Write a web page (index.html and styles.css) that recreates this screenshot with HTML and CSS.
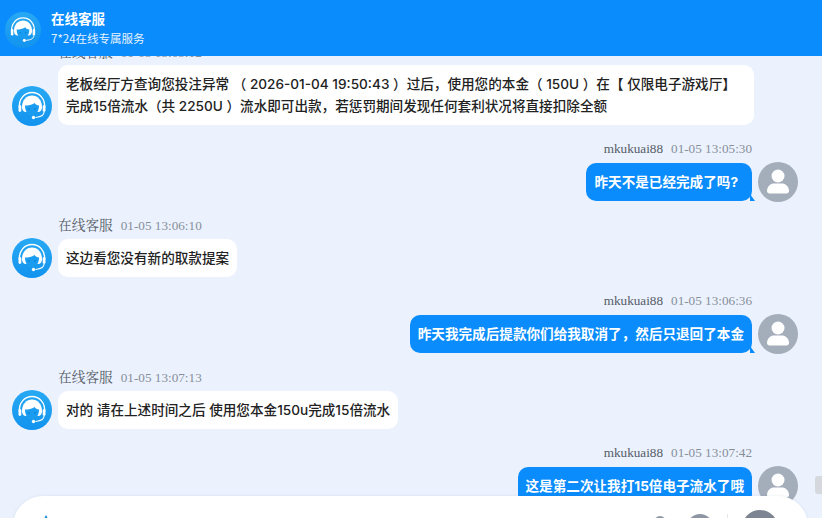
FILE: index.html
```html
<!DOCTYPE html>
<html lang="zh">
<head>
<meta charset="utf-8">
<title>在线客服</title>
<link rel="stylesheet" href="styles.css">
</head>
<body>
<svg class="defs" width="0" height="0" aria-hidden="true">
  <defs>
    <linearGradient id="agentBg" x1="0" y1="0" x2="0" y2="1">
      <stop offset="0" stop-color="#28a9f4"/>
      <stop offset="1" stop-color="#1293ee"/>
    </linearGradient>
  </defs>
  <symbol id="agent" viewBox="0 0 40 40">
    <circle cx="20" cy="20" r="20" fill="url(#agentBg)"/>
    <path d="M7.500 22c-1-9 5-15.500 12.500-15.500S33.500 13 32.500 22" fill="none" stroke="#fff" stroke-width="1.400"/>
    <path d="M10 21c0-7 4.500-11.500 10-11.500S30 14 30 21c0 3-1.500 5-4 5H14c-2.500 0-4-2-4-5z" fill="#fff"/>
    <path d="M13 19.500c3.500 0 7-.5 9.500-2.500 1 1.500 2.500 2.500 4.500 2.500 0 6-3 10-7 10s-7-4-7-10z" fill="#1a9cf0"/>
    <circle cx="17" cy="23" r=".8" fill="#0f7cd0"/>
    <circle cx="23" cy="23" r=".8" fill="#0f7cd0"/>
    <rect x="6.500" y="19" width="2.800" height="7" rx="1.400" fill="#fff"/>
    <rect x="30.700" y="19" width="2.800" height="7" rx="1.400" fill="#fff"/>
    <path d="M32 26c0 3.500-3 5-8.500 5.500" fill="none" stroke="#fff" stroke-width="1.100"/>
    <circle cx="21.500" cy="31.500" r="1.700" fill="#fff"/>
  </symbol>
  <symbol id="user" viewBox="0 0 40 40">
    <circle cx="20" cy="20" r="20" fill="#a4adba"/>
    <circle cx="20" cy="14" r="6.500" fill="#fff"/>
    <path d="M9 29c0-5 4-7.500 7-7.500h8c3 0 7 2.500 7 7.500 0 1.500-1 2.500-2.500 2.500h-17C10 31.500 9 30.500 9 29z" fill="#fff"/>
  </symbol>
</svg>
<div class="app">
  <header class="topbar">
    <svg class="avatar"><use href="#agent"/></svg>
    <div class="topbar-text">
      <div class="topbar-title">在线客服</div>
      <div class="topbar-sub">7*24在线专属服务</div>
    </div>
  </header>
  <main class="chat">
    <section class="msg msg-first">
      <div class="meta"><span class="name name-cjk">在线客服</span><span class="time">01-05 13:05:12</span></div>
      <div class="row">
        <svg class="avatar"><use href="#agent"/></svg>
        <div class="bubble bubble-wide">老板经厅方查询您投注异常 （ 2026-01-04 19:50:43 ）过后，使用您的本金（ 150U ）在【 仅限电子游戏厅】<br>完成15倍流水（共 2250U ）流水即可出款，若惩罚期间发现任何套利状况将直接扣除全额</div>
      </div>
    </section>
    <section class="msg mine">
      <div class="meta"><span class="name">mkukuai88</span><span class="time">01-05 13:05:30</span></div>
      <div class="row">
        <div class="bubble bubble-tail">昨天不是已经完成了吗?</div>
        <svg class="avatar"><use href="#user"/></svg>
      </div>
    </section>
    <section class="msg">
      <div class="meta"><span class="name name-cjk">在线客服</span><span class="time">01-05 13:06:10</span></div>
      <div class="row">
        <svg class="avatar"><use href="#agent"/></svg>
        <div class="bubble">这边看您没有新的取款提案</div>
      </div>
    </section>
    <section class="msg mine">
      <div class="meta"><span class="name">mkukuai88</span><span class="time">01-05 13:06:36</span></div>
      <div class="row">
        <div class="bubble">昨天我完成后提款你们给我取消了，然后只退回了本金</div>
        <svg class="avatar"><use href="#user"/></svg>
      </div>
    </section>
    <section class="msg">
      <div class="meta"><span class="name name-cjk">在线客服</span><span class="time">01-05 13:07:13</span></div>
      <div class="row">
        <svg class="avatar"><use href="#agent"/></svg>
        <div class="bubble">对的 请在上述时间之后 使用您本金150u完成15倍流水</div>
      </div>
    </section>
    <section class="msg mine">
      <div class="meta"><span class="name">mkukuai88</span><span class="time">01-05 13:07:42</span></div>
      <div class="row">
        <div class="bubble">这是第二次让我打15倍电子流水了哦</div>
        <svg class="avatar"><use href="#user"/></svg>
      </div>
    </section>
  </main>
  <div class="scroll-thumb"></div>
  <footer class="composer">
    <svg class="composer-logo" viewBox="0 0 16 16"><path d="M8 1c1.500 2 2 4 2 9H6c0-5 .5-7 2-9z" fill="#1a8fd8"/></svg>
    <div class="composer-tools">
      <span class="tool tool-a"></span>
      <span class="tool tool-b"></span>
      <span class="divider"></span>
      <span class="tool tool-send"></span>
    </div>
  </footer>
</div>
</body>
</html>
```
FILE: styles.css
```css
* { box-sizing: border-box; }
html, body { margin: 0; height: 100%; }
body { overflow: hidden; background: #ebf2fe; font-family: "Inter", "Noto Sans CJK SC", sans-serif; }
.defs { position: absolute; }
.app { position: relative; height: 518px; display: flex; flex-direction: column; overflow: hidden; }
.avatar { width: 40px; height: 40px; flex: none; display: block; }

.topbar { position: relative; z-index: 2; height: 56px; flex: none; background: #0a8cfd; color: #fff; display: flex; align-items: center; gap: 10px; padding: 3px 0 0 5px; font-family: "Noto Sans CJK SC", sans-serif; }
.topbar .avatar { width: 36px; height: 36px; }
.topbar-text { display: flex; flex-direction: column; gap: 2px; margin-top: -3px; }
.topbar-title { font-size: 13.5px; line-height: 18px; font-weight: 700; }
.topbar-sub { font-size: 11.5px; line-height: 18px; color: #e8f3ff; }

.chat { flex: 1; min-height: 0; overflow: hidden; padding: 0 24px 0 12px; display: flex; flex-direction: column; gap: 14px; }
.msg { display: flex; flex-direction: column; gap: 3px; flex: none; }
.msg-first { margin-top: -13px; }
.meta { display: flex; gap: 8px; padding-left: 46px; font-family: "Liberation Serif", "Noto Serif CJK SC", "Noto Sans CJK SC", serif; font-size: 13.2px; line-height: 19px; height: 19px; color: #555c66; }
.name-cjk { font-size: 13.7px; }
.time { color: #878e99; }
.row { display: flex; align-items: flex-end; gap: 6px; }
.bubble { background: #fff; color: #222; border-radius: 10px; padding: 8px; margin-bottom: 1px; font-size: 13.6px; line-height: 22px; font-weight: 500; white-space: nowrap; }
.bubble-wide { padding-right: 18px; }
.bubble-tail { padding-right: 14px; }
.mine .meta { justify-content: flex-end; padding: 0 46px 0 0; line-height: 17px; }
.mine .row { justify-content: flex-end; }
.mine .bubble { position: relative; background: #0a8cfd; color: #fff; font-weight: 700; }
.mine .bubble::after { content: ""; position: absolute; right: -3px; bottom: 0; border-left: 5px solid #0a8cfd; border-top: 7px solid transparent; }

.scroll-thumb { position: absolute; right: 0; top: 476px; width: 7px; height: 18px; background: #d5d8dd; border-radius: 3px 0 0 3px; }
.composer { position: absolute; z-index: 3; left: 13px; right: 14px; bottom: -40px; height: 62px; background: #fff; border-radius: 30px; box-shadow: 0 0 3px rgba(90,110,150,.15); display: flex; justify-content: space-between; align-items: flex-start; padding: 18px 30px 0 26px; }
.composer-logo { width: 14px; height: 14px; display: block; }
.composer-tools { display: flex; align-items: flex-start; }
.tool { display: block; border-radius: 50%; background: #8e96a3; }
.tool-a { width: 12px; height: 12px; margin-top: 2px; margin-right: 21px; }
.tool-b { width: 26px; height: 26px; margin-right: 14px; }
.divider { width: 1px; height: 30px; background: #e4e7ec; margin-right: 14px; }
.tool-send { width: 36px; height: 36px; margin-top: -4px; background: #7d8593; }
```
